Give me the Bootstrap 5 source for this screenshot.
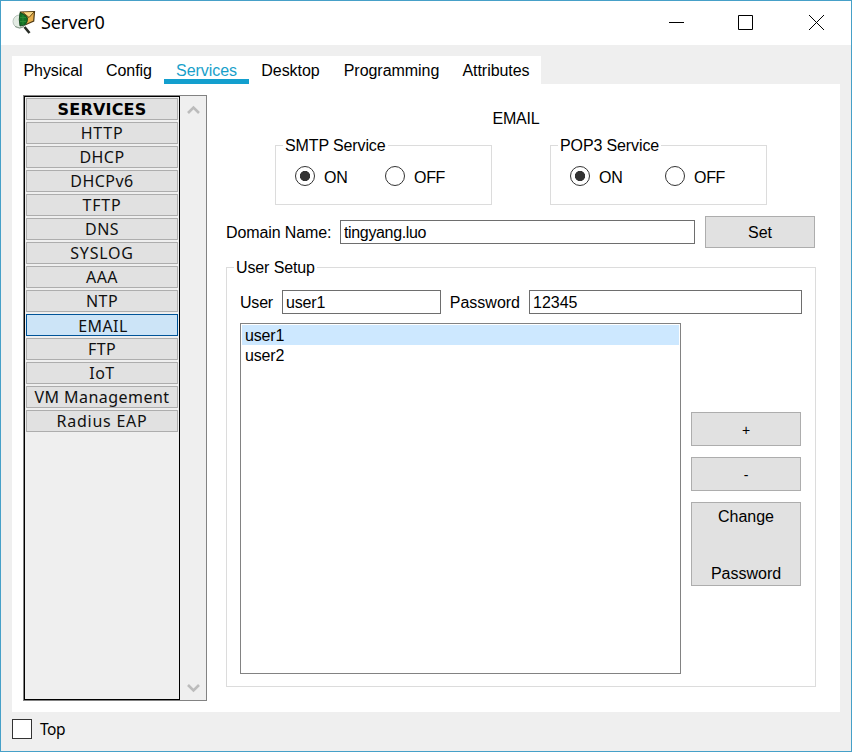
<!DOCTYPE html>
<html lang="en">
<head>
<meta charset="utf-8">
<title>Server0</title>
<link href="https://cdn.jsdelivr.net/npm/bootstrap@5.3.0/dist/css/bootstrap.min.css" rel="stylesheet">
<style>
body{font-family:"Liberation Sans",Arial,sans-serif;font-size:16px;line-height:18px;color:#000;margin:0;overflow:hidden}
.win{width:852px;height:752px;background:#efefef;border:1px solid #46a0c8}
.titlebar{height:44px;background:#fff}
.title-text{font-family:"Noto Sans","Open Sans",sans-serif;font-size:18px;line-height:24px;letter-spacing:-.1px;margin:-2px 0 0 4px}
.tabs{margin:11px 0 0 11px;width:529px;height:28px;background:#fff}
.tabs .nav-link{padding:6px 0 0;height:28px;color:#000;text-align:center;white-space:nowrap;border-radius:0;border-bottom:5px solid transparent;letter-spacing:-.05px}
.tabs .nav-link.active{color:#189fca;border-bottom-color:#139fce}
.w82{width:82px}.w70{width:70px}.w85{width:85px}.w83{width:83px}.w119{width:119px}.w90{width:90px}
.pane{margin-left:11px;width:828px;height:628px;background:#fff;padding:11px 24px 0 11px}
.side{width:184px;height:606px;border:1px solid #828282;background:#efefef;flex:none}
.side-list{width:156px;height:604px;border:1px solid #000;padding:1px;gap:2px}
.side-btn{height:22px;width:152px;margin:0;padding:0;border:1px solid #adadad;border-radius:0;background:#e1e1e1;color:#111;font:16px/20px "Noto Sans","DejaVu Sans",sans-serif;letter-spacing:.45px;white-space:nowrap;text-align:center}
.side-btn.heading{font-family:"DejaVu Sans",sans-serif;font-weight:700;letter-spacing:.2px;color:#000;padding-top:1px}
.side-btn.current{background:#cce4f7;border-color:#005499;line-height:21px;padding:1px 0 0 2px}
.side-btn.sp6{letter-spacing:.75px}
.side-scroll{width:26px;padding:9px 0 7px}
.main{margin-left:19px;width:590px}
.heading-email{height:50px;padding:15px 10px 0 0;text-align:center;letter-spacing:-.2px}
.groupbox{border:1px solid #dcdcdc}
.groupbox>.cap{display:block;width:max-content;background:#fff;margin:-10px 0 0 7px;padding:1px 2px 0;height:19px;white-space:nowrap;letter-spacing:-.12px}
.svc{width:217px;height:60px}
.services-row{padding-left:49px;gap:58px}
.opt{width:90px}
.opt.wide{width:95px}
.opt .form-check-input{width:20px;height:20px;margin:0;background:none;border:1px solid #333;flex:none}
.opt .form-check-input:checked{background-image:radial-gradient(circle,#333 0 4.8px,transparent 5.4px)}
.opts{padding:11px 0 0 19px}
.opt label{margin-left:9px;padding-top:3px;letter-spacing:-.3px}
.field{border:1px solid #6e6e6e;border-radius:0;padding:1px 3px 0;height:24px;color:#000;font-size:16px;line-height:18px;background:#fff}
.winbtn{border:1px solid #adadad;border-radius:0;background:#e1e1e1;color:#000;width:110px;padding:1px 0 0;font-size:16px;line-height:18px}
.domain{margin-top:11px;height:32px;padding-right:1px}
.domain label{width:105px;letter-spacing:-.12px;padding-top:1px;white-space:nowrap}
.f-domain{width:355px;margin-left:9px;letter-spacing:-.35px}
.f-user{width:159px;letter-spacing:-.15px}
.user-lbl{width:42px;padding-top:2px;letter-spacing:-.2px}
.pw-lbl{padding-top:2px}
.f-pass{width:273px;margin-left:9px}
.setup{margin-top:19px;height:420px}
.setup-in{padding:13px 13px 0}
.users{width:441px;height:351px;border:1px solid #828282;border-radius:0;padding:1px;margin-top:9px}
.users .list-group-item{border:0;border-radius:0;color:#000;background:none;padding:2px 3px 0;height:20px;letter-spacing:-.15px}
.users .list-group-item.sel{background:#cde8ff}
.actions{padding:98px 0 0 10px;gap:11px}
.h34{height:34px}
.sign{font-size:14px}
.h84{height:84px;padding:5px 0 2px}
.foot{padding:7px 0 0 11px}
.foot .form-check-input{width:20px;height:20px;margin:0 8px 0 0;border:1px solid #333;border-radius:0;background:#fff}
.foot label{font-family:"Noto Sans",sans-serif;font-size:15.5px;letter-spacing:-.5px}
</style>
</head>
<body>
<div class="win">
  <header class="titlebar d-flex align-items-center">
    <svg class="flex-shrink-0 ms-2 me-1" width="28" height="26" viewBox="9 10 28 26">
      <path d="M24.500 27l5 6" stroke="#292d27" stroke-width="2.600"/>
      <path d="M20.500 12l14-.5-.8 9.500-11 5z" fill="#e9b04d" stroke="#4e3a14" stroke-width="1.200"/>
      <path d="M23 12.500l6 5 5-5.500" fill="#f8d886" stroke="#694912"/>
      <circle cx="19.500" cy="21.500" r="6.500" fill="#e3ebe3" stroke="#b9c4bd"/>
      <path d="M20 12.500q6 2 7.500 5.500.5 4-2.500 7l-5 1q-1.500-6 0-13.500z" fill="#127126" stroke="#103e18" stroke-width=".8"/>
      <path d="M20 17.500h6M20 21.500h6M23 15v10" stroke="#2f9038" stroke-width=".8"/>
      <path d="M15 26.500q5 3 9 0" fill="none" stroke="#899b8c"/>
    </svg>
    <div class="title-text ms-0">Server0</div>
    <svg class="ms-auto" width="183" height="44" viewBox="668 1 183 44" fill="none" stroke="#000">
      <path d="M669 22.500h15"/>
      <path d="M738.500 15.500h14v14h-14zM809 15l15 15m0-15l-15 15"/>
    </svg>
  </header>
  <nav class="nav tabs flex-nowrap">
    <a class="nav-link w82">Physical</a><a class="nav-link w70">Config</a><a class="nav-link active w85">Services</a><a class="nav-link w83">Desktop</a><a class="nav-link w119">Programming</a><a class="nav-link w90">Attributes</a>
  </nav>
  <main class="pane d-flex">
    <aside class="side d-flex">
      <div class="side-list d-flex flex-column">
        <div class="side-btn heading">SERVICES</div>
        <button class="side-btn sp6">HTTP</button>
        <button class="side-btn">DHCP</button>
        <button class="side-btn">DHCPv6</button>
        <button class="side-btn sp6">TFTP</button>
        <button class="side-btn">DNS</button>
        <button class="side-btn sp6">SYSLOG</button>
        <button class="side-btn">AAA</button>
        <button class="side-btn">NTP</button>
        <button class="side-btn current">EMAIL</button>
        <button class="side-btn">FTP</button>
        <button class="side-btn">IoT</button>
        <button class="side-btn">VM Management</button>
        <button class="side-btn sp6">Radius EAP</button>
      </div>
      <div class="side-scroll d-flex flex-column justify-content-between align-items-center">
        <svg width="14" height="10" fill="none" stroke="#bcbcbc" stroke-width="2.600"><path d="M2 8l5.500-5.500L13 8"/></svg>
        <svg width="14" height="10" fill="none" stroke="#bcbcbc" stroke-width="2.600"><path d="M2 2l5.500 5.500L13 2"/></svg>
      </div>
    </aside>
    <section class="main">
      <div class="heading-email">EMAIL</div>
      <div class="services-row d-flex">
        <div class="groupbox svc"><span class="cap">SMTP Service</span>
          <div class="opts d-flex">
            <div class="opt d-flex"><input class="form-check-input" type="radio" name="smtp" id="s1" checked><label for="s1">ON</label></div>
            <div class="opt d-flex"><input class="form-check-input" type="radio" name="smtp" id="s2"><label for="s2">OFF</label></div>
          </div>
        </div>
        <div class="groupbox svc"><span class="cap">POP3 Service</span>
          <div class="opts d-flex">
            <div class="opt wide d-flex"><input class="form-check-input" type="radio" name="pop" id="p1" checked><label for="p1">ON</label></div>
            <div class="opt d-flex"><input class="form-check-input" type="radio" name="pop" id="p2"><label for="p2">OFF</label></div>
          </div>
        </div>
      </div>
      <div class="domain d-flex align-items-center">
        <label for="dn">Domain Name:</label><input class="field f-domain" id="dn" value="tingyang.luo"><button class="btn winbtn h-100 ms-auto">Set</button>
      </div>
      <div class="groupbox setup"><span class="cap">User Setup</span>
        <div class="setup-in">
          <div class="d-flex align-items-center">
            <label class="user-lbl">User</label><input class="field f-user" value="user1"><label class="pw-lbl ms-auto">Password</label><input class="field f-pass" value="12345">
          </div>
          <div class="d-flex">
            <ul class="list-group users"><li class="list-group-item sel">user1</li><li class="list-group-item">user2</li></ul>
            <div class="actions d-flex flex-column">
              <button class="btn winbtn h34 sign">+</button>
              <button class="btn winbtn h34 sign">-</button>
              <button class="btn winbtn h84 d-flex flex-column justify-content-between align-items-center"><span>Change</span><span>Password</span></button>
            </div>
          </div>
        </div>
      </div>
    </section>
  </main>
  <footer class="foot d-flex align-items-center"><input class="form-check-input" type="checkbox" id="top"><label for="top">Top</label></footer>
</div>
<script src="https://cdn.jsdelivr.net/npm/bootstrap@5.3.0/dist/js/bootstrap.bundle.min.js"></script>
</body>
</html>
